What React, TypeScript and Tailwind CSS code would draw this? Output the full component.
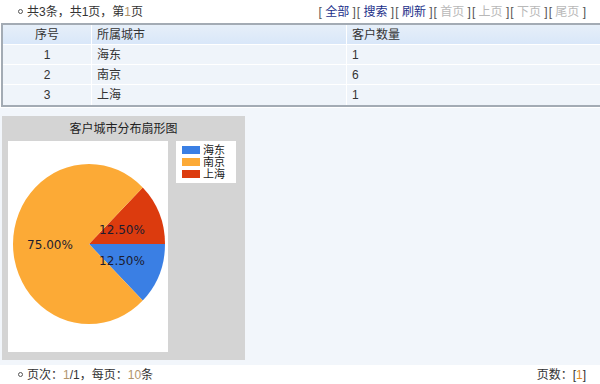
import React from "react";

const font = { fontFamily: '"Liberation Sans", "Noto Sans CJK SC", sans-serif' };

function Circle() {
  return <span className="inline-block w-[5px] h-[5px] rounded-full border border-[#555] mr-[4px] mb-[1px]" />;
}

function Link({ t, on }: { t: string; on: boolean }) {
  return (
    <span className="text-[#555]">
      [ <span className={on ? "text-[#1b2f8a]" : "text-[#b8b8b8]"}>{t}</span> ]
    </span>
  );
}

export default function App() {
  const rows = [
    ["1", "海东", "1"],
    ["2", "南京", "6"],
    ["3", "上海", "1"],
  ];
  const cx = 81, cy = 103, rx = 76, ry = 80;
  const c = 0.7071;
  const p45d = [cx + rx * c, cy + ry * c];
  const p45u = [cx + rx * c, cy - ry * c];
  return (
    <div className="w-[600px] h-[384px] bg-white text-[12px] text-[#333] overflow-hidden flex flex-col" style={font}>
      <div className="h-[23px] flex items-center justify-between pl-[18px] pr-[14px]">
        <div className="flex items-center">
          <Circle />
          <span>共3条，共1页，第<span className="text-[#b0946c]">1</span>页</span>
        </div>
        <div className="flex gap-[1px]">
          <Link t="全部" on />
          <Link t="搜索" on />
          <Link t="刷新" on />
          <Link t="首页" on={false} />
          <Link t="上页" on={false} />
          <Link t="下页" on={false} />
          <Link t="尾页" on={false} />
        </div>
      </div>
      <div className="ml-[1px] border-t-2 border-b-2 border-l-2 border-[#a3abb4]">
        <div className="h-[20px] flex items-center bg-gradient-to-b from-[#e6eff9] to-[#d9e7f9] border-b border-white">
          <div className="w-[88px] text-center">序号</div>
          <div className="w-[255px] pl-[5px] border-l border-white h-full flex items-center">所属城市</div>
          <div className="flex-1 pl-[5px] border-l border-white h-full flex items-center">客户数量</div>
        </div>
        {rows.map((r, i) => (
          <div key={i} className={"h-[20px] flex items-center bg-[#eff4fa] " + (i < 2 ? "border-b border-white" : "")}>
            <div className="w-[88px] text-center">{r[0]}</div>
            <div className="w-[255px] pl-[5px] border-l border-white h-full flex items-center">{r[1]}</div>
            <div className="flex-1 pl-[5px] border-l border-white h-full flex items-center">{r[2]}</div>
          </div>
        ))}
      </div>
      <div className="mt-[1px] h-[257px] bg-[#f2f6fb] pt-[8px] pl-[2px]">
        <div className="w-[243px] h-[244px] bg-[#d4d4d4] flex flex-col">
          <div className="h-[25px] flex items-center justify-center text-[#222]">客户城市分布扇形图</div>
          <div className="flex">
            <div className="ml-[6px] w-[160px] h-[211px] bg-white">
              <svg width="160" height="211" viewBox="0 0 160 211">
                <path d={`M${cx},${cy} L${cx + rx},${cy} A${rx},${ry} 0 0 1 ${p45d[0]},${p45d[1]} Z`} fill="#3a7fe4" />
                <path d={`M${cx},${cy} L${p45u[0]},${p45u[1]} A${rx},${ry} 0 0 1 ${cx + rx},${cy} Z`} fill="#dc3b0e" />
                <path d={`M${cx},${cy} L${p45d[0]},${p45d[1]} A${rx},${ry} 0 1 1 ${p45u[0]},${p45u[1]} Z`} fill="#fcaa36" />
                <g fontSize="12" fill="#1c1c30" fontFamily='"DejaVu Sans", sans-serif' textAnchor="middle">
                  <text x="114" y="93">12.50%</text>
                  <text x="42" y="108">75.00%</text>
                  <text x="114" y="124">12.50%</text>
                </g>
              </svg>
            </div>
            <div className="ml-[8px] w-[60px] h-[42px] bg-white flex flex-col justify-center pl-[6px] text-[11px] leading-[12px] text-[#222]">
              {[
                ["#3a7fe4", "海东"],
                ["#fcaa36", "南京"],
                ["#dc3b0e", "上海"],
              ].map(([col, l]) => (
                <div key={l} className="flex items-center">
                  <span className="w-[18px] h-[8px] mr-[3px]" style={{ background: col }} />
                  {l}
                </div>
              ))}
            </div>
          </div>
        </div>
      </div>
      <div className="flex-1 flex items-center justify-between pl-[18px] pr-[14px]">
        <div className="flex items-center">
          <Circle />
          <span>页次：<span className="text-[#b0946c]">1</span>/1，每页：<span className="text-[#b0946c]">10</span>条</span>
        </div>
        <div>页数：[<span className="text-[#e08a1e]">1</span>]</div>
      </div>
    </div>
  );
}
